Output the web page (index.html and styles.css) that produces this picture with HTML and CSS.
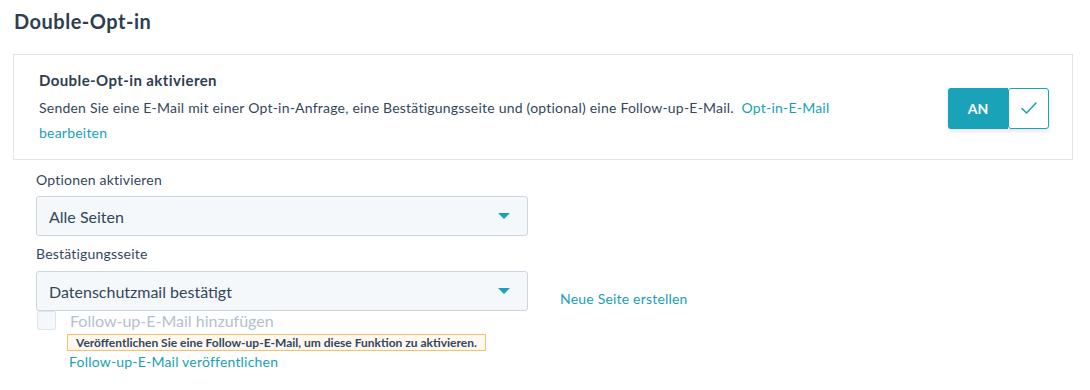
FILE: index.html
```html
<!DOCTYPE html>
<html lang="de">
<head>
    <meta charset="UTF-8">
    <title>Double-Opt-in</title>
    <link rel="stylesheet" href="styles.css">
</head>
<body>
    <div class="page">
        <h1 class="page-title">Double-Opt-in</h1>

        <div class="card">
            <div class="card-body">
                <h2 class="card-title">Double-Opt-in aktivieren</h2>
                <p class="card-text">Senden Sie eine E-Mail mit einer Opt-in-Anfrage, eine Bestätigungsseite und (optional) eine Follow-up-E-Mail.&nbsp; <a href="#" class="link">Opt-in-E-Mail bearbeiten</a></p>
            </div>
            <div class="toggle">
                <span class="toggle-label">AN</span>
                <span class="toggle-knob">
                    <svg width="18" height="14" viewBox="0 0 18 14"><path d="M2 7.5 L6.5 12 L16 2" fill="none" stroke="#1aa3b8" stroke-width="1.6" stroke-linecap="round" stroke-linejoin="round"/></svg>
                </span>
            </div>
        </div>

        <div class="options">
            <label class="field-label">Optionen aktivieren</label>
            <div class="select">
                <span>Alle Seiten</span>
                <span class="caret"></span>
            </div>

            <label class="field-label">Bestätigungsseite</label>
            <div class="select-row">
                <div class="select">
                    <span>Datenschutzmail bestätigt</span>
                    <span class="caret"></span>
                </div>
                <a href="#" class="link new-page">Neue Seite erstellen</a>
            </div>

            <div class="checkbox-row">
                <span class="checkbox"></span>
                <span class="checkbox-text">Follow-up-E-Mail hinzufügen</span>
            </div>
            <div class="followup">
                <div class="warning">Veröffentlichen Sie eine Follow-up-E-Mail, um diese Funktion zu aktivieren.</div>
                <a href="#" class="link">Follow-up-E-Mail veröffentlichen</a>
            </div>
        </div>
    </div>
</body>
</html>
```

FILE: styles.css
```css
* {
    box-sizing: border-box;
    margin: 0;
    padding: 0;
}

body {
    font-family: Lato, 'Open Sans', sans-serif;
    color: #33475b;
    background: #fff;
}

.page {
    padding: 9px 17px 0 13px;
}

.page-title {
    font-size: 20px;
    font-weight: 700;
    letter-spacing: 0.5px;
    color: #2d3e50;
    padding-left: 1px;
    line-height: 24px;
    margin-bottom: 21px;
}

.card {
    border: 1px solid #dfe3eb;
    display: flex;
    align-items: center;
    padding: 15px 23px 14px 25px;
    gap: 100px;
}

.card-body {
    flex: 1;
}

.card-title {
    font-size: 15px;
    font-weight: 700;
    letter-spacing: 0.4px;
    color: #2d3e50;
    line-height: 20px;
    margin-bottom: 5px;
}

.card-text {
    font-size: 14px;
    letter-spacing: 0.22px;
    line-height: 25px;
}

.link {
    color: #1a9fb5;
    text-decoration: none;
}

.toggle {
    display: flex;
    height: 41px;
    margin-top: 1px;
    border-radius: 3px;
    box-shadow: 0 2px 4px rgba(0, 0, 0, 0.12);
}

.toggle-label {
    width: 60px;
    background: #1aa3b8;
    color: #fff;
    font-size: 14px;
    font-weight: 700;
    display: flex;
    align-items: center;
    justify-content: center;
    border-radius: 3px 0 0 3px;
}

.toggle-knob {
    width: 41px;
    border: 1px solid #1aa3b8;
    border-radius: 3px;
    background: #fff;
    display: flex;
    align-items: center;
    justify-content: center;
}

.options {
    padding-left: 23px;
    padding-top: 11px;
}

.field-label {
    display: block;
    font-size: 14px;
    letter-spacing: 0.2px;
    line-height: 18px;
    margin-bottom: 7px;
}

.select + .field-label {
    margin-top: 1px;
}

.select-row {
    margin-top: 0;
}

.field-label + .select-row {
    padding-top: 1px;
}

.select {
    width: 492px;
    height: 40px;
    background: #f5f8fa;
    border: 1px solid #cbd6e2;
    border-radius: 3px;
    display: flex;
    align-items: center;
    justify-content: space-between;
    padding: 0 17px 0 12px;
    font-size: 16px;
    color: #33475b;
    margin-bottom: 9px;
}

.caret {
    width: 0;
    height: 0;
    border-left: 6px solid transparent;
    border-right: 6px solid transparent;
    border-top: 6px solid #1aa3b8;
}

.select-row {
    display: flex;
    align-items: center;
    gap: 32px;
}

.select-row .select {
    margin-bottom: 0;
}

.new-page {
    font-size: 14px;
    letter-spacing: 0.2px;
    padding-top: 14px;
}

.checkbox-row {
    display: flex;
    align-items: center;
    gap: 14px;
    margin-top: 0;
    padding-left: 1px;
}

.checkbox {
    width: 19px;
    height: 19px;
    border: 1px solid #dfe3eb;
    background: #f5f8fa;
    border-radius: 2px;
}

.checkbox-text {
    font-size: 16px;
    color: #b0c1d4;
}

.followup {
    padding-left: 31px;
    padding-top: 1px;
}

.warning {
    display: inline-block;
    border: 1px solid #f5c26b;
    background: #fef8f0;
    font-size: 12px;
    font-weight: 700;
    color: #33475b;
    padding: 0 8px 0 8px;
    line-height: 15px;
}

.followup .link {
    display: block;
    font-size: 14px;
    letter-spacing: 0.2px;
    margin-top: 2px;
    padding-left: 2px;
}
```
